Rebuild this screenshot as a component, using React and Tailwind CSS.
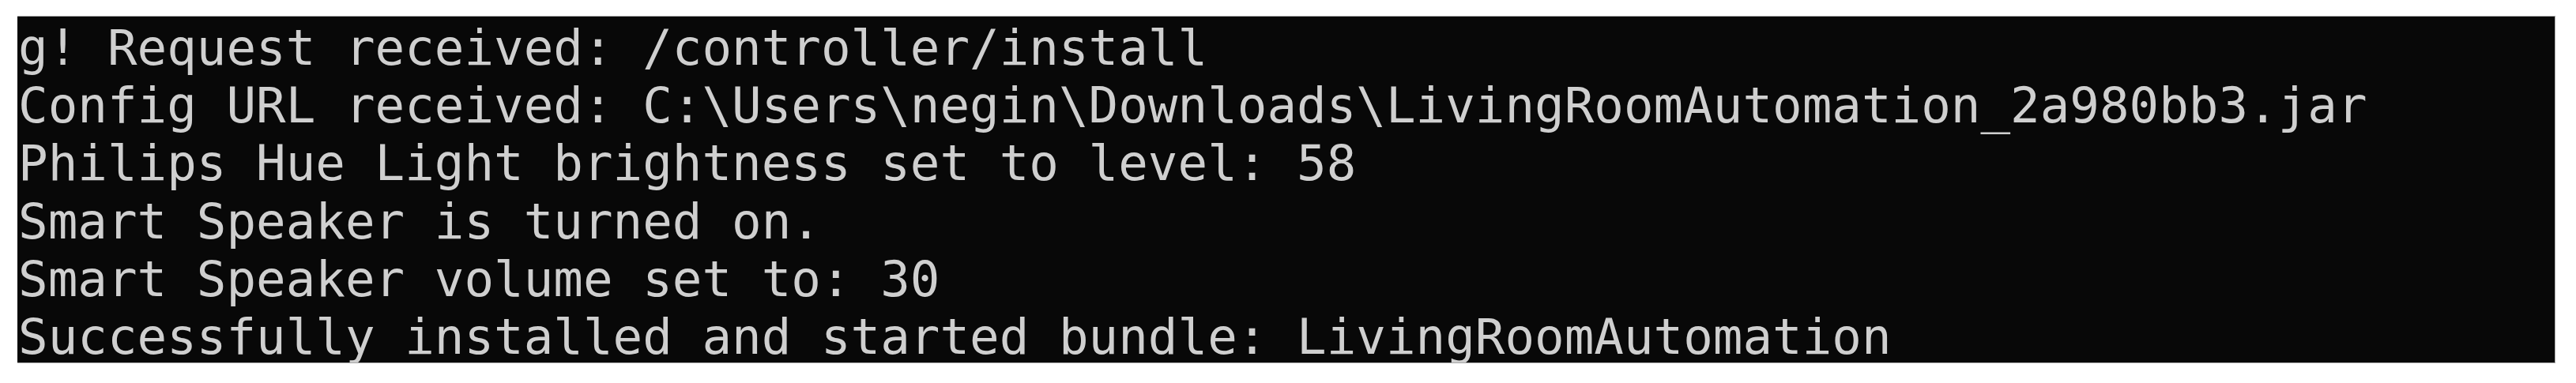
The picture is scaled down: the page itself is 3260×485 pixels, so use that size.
export default function App() {
  const lines = [
    "g! Request received: /controller/install",
    "Config URL received: C:\\Users\\negin\\Downloads\\LivingRoomAutomation_2a980bb3.jar",
    "Philips Hue Light brightness set to level: 58",
    "Smart Speaker is turned on.",
    "Smart Speaker volume set to: 30",
    "Successfully installed and started bundle: LivingRoomAutomation",
  ];
  return (
    <div className="w-[3260px] h-[485px] bg-white pt-[20px] pl-[22px]">
      <div className="w-[3212px] h-[440px] bg-[#080808] border-t border-b border-r border-[#a8a8a8] overflow-hidden pt-[3px] pl-[1px]">
        {lines.map((l, i) => (
          <div
            key={i}
            className="whitespace-pre text-[62.5px] leading-[73.2px] text-[#cfcfcf] font-['DejaVu_Sans_Mono',monospace]"
          >
            {l}
          </div>
        ))}
      </div>
    </div>
  );
}
